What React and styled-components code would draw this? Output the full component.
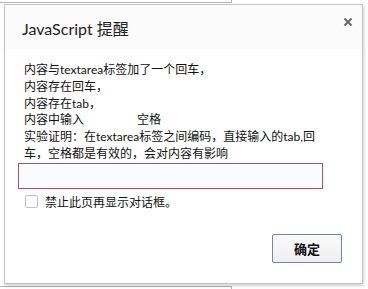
import React from "react";
import styled, { createGlobalStyle } from "styled-components";

const GlobalStyle = createGlobalStyle`
  html, body {
    margin: 0;
    padding: 0;
    background: #ffffff;
  }
  body {
    font-family: Lato, "Noto Sans CJK SC", sans-serif;
    color: #222;
  }
`;

const Screen = styled.div`
  position: relative;
  width: 368px;
  height: 289px;
  overflow: hidden;
  background: #fff;
`;

// bits of the page that peek out around the dialog
const PageEdge = styled.div`
  width: 231px;
  height: ${(p) => p.$h}px;
  border-right: 1px solid #b5b5b5;
  ${(p) => (p.$bottom ? "border-top: 1px solid #b5b5b5;" : "border-bottom: 1px solid #b5b5b5;")}
  margin-top: ${(p) => p.$mt || 0}px;
`;

const Dialog = styled.div`
  position: absolute;
  left: 4px;
  top: 4px;
  width: 359px;
  height: 280px;
  box-sizing: border-box;
  border: 1px solid #c4c4c4;
  background: #fff;
  box-shadow: 1px 2px 3px rgba(0, 0, 0, 0.18);
  display: flex;
  flex-direction: column;
`;

const Header = styled.div`
  height: 44px;
  display: flex;
  align-items: flex-start;
  justify-content: space-between;
  padding: 14px 9px 0 17px;
  box-sizing: border-box;
  background: #fbfbfb;
`;

const Title = styled.div`
  font-size: 16px;
  line-height: 20px;
  color: #222;
`;

const CloseBtn = styled.div`
  width: 10px;
  height: 10px;
  margin-top: -2px;
  display: flex;
`;

const Body = styled.div`
  flex: 1;
  display: flex;
  flex-direction: column;
  padding: 13px 20px 0 13px;
`;

const Message = styled.div`
  width: 297px;
  font-size: 12px;
  line-height: 16.8px;
  white-space: pre-wrap;
  tab-size: 56.5px;
  padding-left: 6px;
  color: #111;
`;

const Field = styled.div`
  width: 305px;
  height: 26px;
  box-sizing: border-box;
  border: 1px solid #b4545a;
  background: #f8fcfe;
`;

const CheckRow = styled.label`
  display: flex;
  align-items: center;
  gap: 7px;
  margin-top: 4px;
  padding-left: 7px;
  font-size: 12px;
  color: #111;
`;

const Box = styled.span`
  width: 13px;
  height: 13px;
  box-sizing: border-box;
  border: 1px solid #c2c2c2;
  border-radius: 2px;
  background: #fff;
`;

const Footer = styled.div`
  display: flex;
  justify-content: flex-end;
  padding: 24px 0 0;
`;

const OkButton = styled.div`
  width: 70px;
  height: 29px;
  box-sizing: border-box;
  border: 1px solid #6f87a8;
  border-radius: 2px;
  background: linear-gradient(#fafafa, #efefef);
  display: flex;
  align-items: center;
  justify-content: center;
  font-size: 13px;
  font-weight: bold;
  color: #111;
`;

const App = () => {
  return (
    <>
      <GlobalStyle />
      <Screen>
        <PageEdge $h={2} />
        <PageEdge $h={2} $bottom $mt={283} />
        <Dialog>
          <Header>
            <Title>JavaScript 提醒</Title>
            <CloseBtn>
              <svg width="10" height="10" viewBox="0 0 10 10">
                <path d="M1.5 1.5 L8.5 8.5 M8.5 1.5 L1.5 8.5" stroke="#6a6a6a" strokeWidth="2" />
              </svg>
            </CloseBtn>
          </Header>
          <Body>
            <Message>
              {"内容与textarea标签加了一个回车，\n内容存在回车，\n内容存在tab，\n内容中输入\t空格\n实验证明：在textarea标签之间编码，直接输入的tab,回车，空格都是有效的，会对内容有影响"}
            </Message>
            <Field />
            <CheckRow>
              <Box />
              禁止此页再显示对话框。
            </CheckRow>
            <Footer>
              <OkButton>确定</OkButton>
            </Footer>
          </Body>
        </Dialog>
      </Screen>
    </>
  );
};

export default App;
